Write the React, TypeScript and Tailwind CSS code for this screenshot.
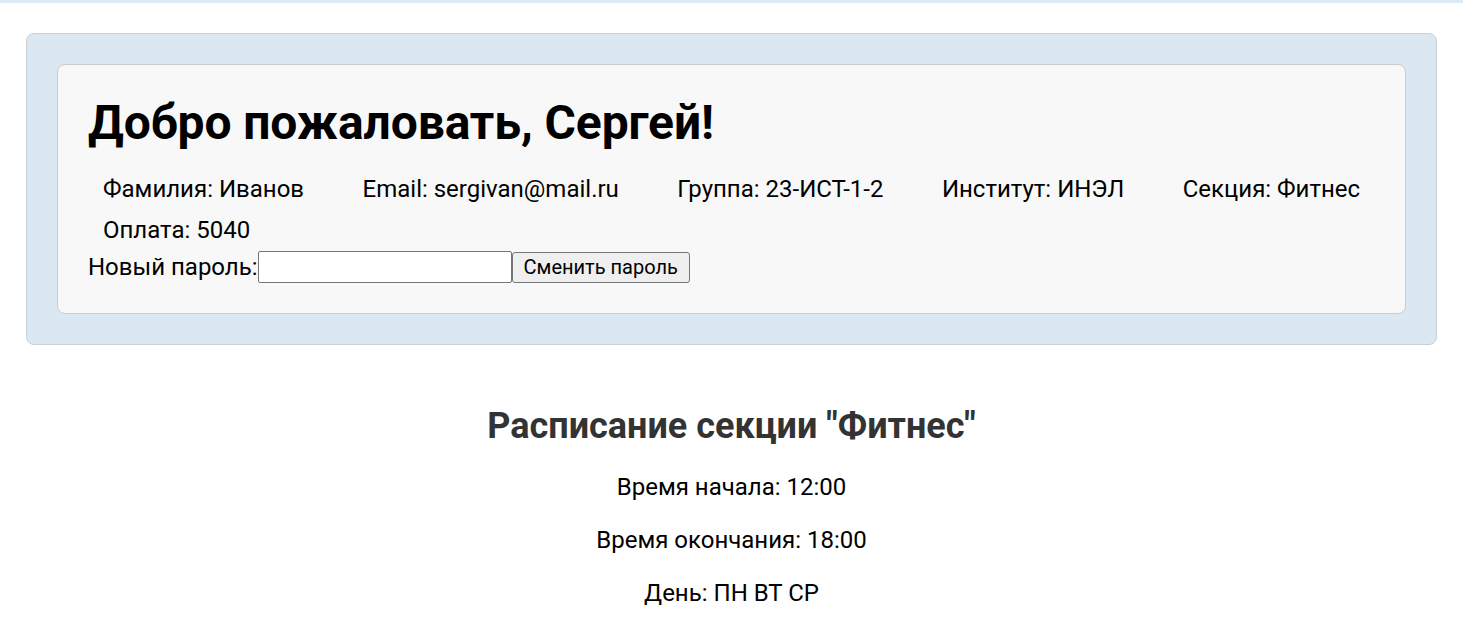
export default function App() {
  const info = [
    'Фамилия: Иванов',
    'Email: sergivan@mail.ru',
    'Группа: 23-ИСТ-1-2',
    'Институт: ИНЭЛ',
    'Секция: Фитнес',
    'Оплата: 5040',
  ];

  return (
    <div className="min-h-screen bg-white text-black font-['Roboto',sans-serif]">
      <div className="h-[3px] bg-[#dde9f3]" />
      <div className="px-[26px] pt-[30px]">
        <div className="bg-[#dce8f1] border border-[#c9d0d6] rounded-[8px] p-[30px]">
          <div className="bg-[#f8f8f8] border border-[#cccccc] rounded-[8px] p-[30px]">
            <h1 className="text-[48px] font-bold leading-[56px] tracking-[-0.1px]">Добро пожаловать, Сергей!</h1>
            <div className="mt-[17px] flex flex-wrap gap-x-[58.5px] pl-[15px]">
              {info.map((t) => (
                <span key={t} className="h-[41px] flex items-center text-[24px]">{t}</span>
              ))}
            </div>
            <div className="mt-[1px] flex items-center h-[32px]">
              <label className="text-[24px]">Новый пароль:</label>
              <input
                type="password"
                className="w-[254px] h-[32px] bg-white border border-[#767676] rounded-[2px] px-1 outline-none"
              />
              <button className="h-[31px] px-[11px] bg-[#efefef] border border-[#767676] rounded-[3px] text-[20px] leading-none">
                Сменить пароль
              </button>
            </div>
          </div>
        </div>
      </div>
      <div className="flex flex-col items-center pt-[59px]">
        <h2 className="text-[36px] font-bold text-[#333333] leading-[44px]">Расписание секции "Фитнес"</h2>
        <p className="text-[24px] mt-[25px] leading-[29px]">Время начала: 12:00</p>
        <p className="text-[24px] mt-[24px] leading-[29px]">Время окончания: 18:00</p>
        <p className="text-[24px] mt-[24px] leading-[29px]">День: ПН ВТ СР</p>
      </div>
    </div>
  );
}
